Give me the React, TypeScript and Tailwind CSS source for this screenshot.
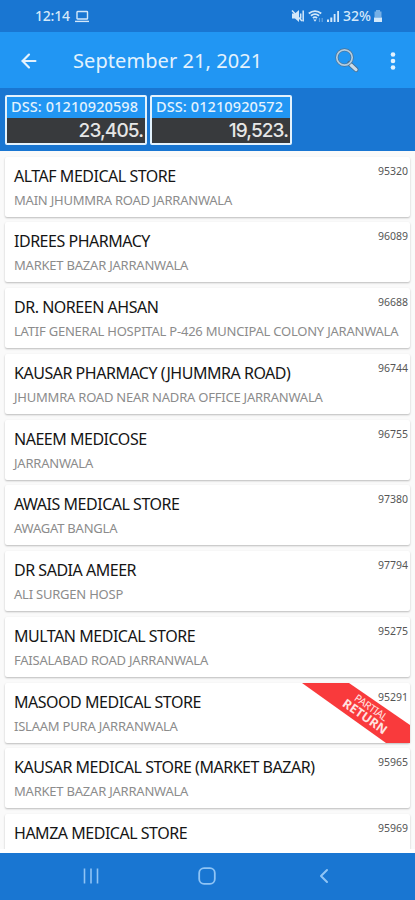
import { ArrowLeft, ChevronLeft } from 'lucide-react';

interface Store {
    name: string;
    address?: string;
    code: string;
    partialReturn?: boolean;
}

const stores: Store[] = [
    { name: 'ALTAF MEDICAL STORE', address: 'MAIN JHUMMRA ROAD JARRANWALA', code: '95320' },
    { name: 'IDREES PHARMACY', address: 'MARKET BAZAR JARRANWALA', code: '96089' },
    { name: 'DR. NOREEN AHSAN', address: 'LATIF GENERAL HOSPITAL P-426 MUNCIPAL COLONY JARANWALA', code: '96688' },
    { name: 'KAUSAR PHARMACY (JHUMMRA ROAD)', address: 'JHUMMRA ROAD NEAR NADRA OFFICE JARRANWALA', code: '96744' },
    { name: 'NAEEM MEDICOSE', address: 'JARRANWALA', code: '96755' },
    { name: 'AWAIS MEDICAL STORE', address: 'AWAGAT BANGLA', code: '97380' },
    { name: 'DR SADIA AMEER', address: 'ALI SURGEN HOSP', code: '97794' },
    { name: 'MULTAN MEDICAL STORE', address: 'FAISALABAD ROAD JARRANWALA', code: '95275' },
    { name: 'MASOOD MEDICAL STORE', address: 'ISLAAM PURA JARRANWALA', code: '95291', partialReturn: true },
    { name: 'KAUSAR MEDICAL STORE (MARKET BAZAR)', address: 'MARKET BAZAR JARRANWALA', code: '95965' },
    { name: 'HAMZA MEDICAL STORE', code: '95969' },
];

const StatusBar = () => (
    <div className="flex h-8 shrink-0 items-center justify-between bg-[#1976d2] pl-[35px] pr-8 text-sm font-medium text-[#d3e8fa]">
        <div className="flex items-center gap-1">
            <span className="tracking-[-0.2px]">12:14</span>
            <svg width="16" height="13" viewBox="0 0 16 13" fill="none" stroke="currentColor" strokeWidth="1.4">
                <rect x="3" y="1.5" width="10.5" height="7.5" rx="0.6" />
                <path d="M1 11.4h14" />
            </svg>
        </div>
        <div className="flex items-center">
            {/* Muted speaker */}
            <svg width="15" height="14" viewBox="0 0 15 14" fill="none" stroke="currentColor" strokeWidth="1.5">
                <path d="M1 4.500h3l4-3.500v12L4 9.500H1z" fill="currentColor" stroke="none" />
                <path d="M9.700 4.500v5M12.200 1.500v11M1 1.500l10 10.500" />
            </svg>
            {/* Wifi */}
            <svg className="ml-0.5" width="16" height="14" viewBox="0 0 16 14" fill="none" stroke="currentColor" strokeWidth="1.8">
                <path d="M.8 4.500C4.500 1.200 9.500 1.200 13.200 4.500M2.900 6.800c2.500-2.100 5.700-2.100 8.200 0M4.900 9c1.300-1 2.900-1 4.200 0" />
                <path d="M7 12.800L5.300 10.500h3.400z" fill="currentColor" stroke="none" />
                <path d="M11.500 9v4M14.200 9v4" strokeWidth="1.2" opacity=".4" />
            </svg>
            {/* Signal */}
            <svg className="ml-[3px]" width="13" height="14" viewBox="0 0 13 14" fill="currentColor">
                <path d="M0 10.500h2V13H0zM3.300 8.500h2V13h-2zM6.700 5h1.800v8H6.700zM10.200 2H12v11h-1.800z" />
            </svg>
            <span className="ml-[3px]">32%</span>
            <svg className="ml-0.5" width="10" height="14" viewBox="0 0 10 14" fill="currentColor">
                <path d="M3 1h4v1.500h1.500v6h-7v-6H3z" opacity=".5" />
                <path d="M1 8.500h8V13H1z" />
            </svg>
        </div>
    </div>
);

const Toolbar = () => (
    <div className="flex h-14 shrink-0 items-center bg-[#2196f3] pl-[18px] pr-[11px] pt-0.5 text-[#e3f2fd]">
        <ArrowLeft size={22} strokeWidth={2.4} />
        <h1 className="ml-[33px] flex-1 whitespace-nowrap text-xl tracking-[0.07px]">September 21, 2021</h1>
        <svg width="26" height="26" viewBox="0 0 26 26" fill="none">
            <path d="M15.500 15.500l6.500 6" stroke="#4c6f8e" strokeWidth="5" strokeLinecap="round" />
            <path d="M17 17l5 4.600" stroke="#c9dcea" strokeWidth="3.200" strokeLinecap="round" />
            <circle cx="10.500" cy="9.500" r="7.700" stroke="#4f7190" strokeWidth="3" />
            <circle cx="10.500" cy="9.500" r="7.700" stroke="#b0cce1" strokeWidth="1.700" />
        </svg>
        <svg className="ml-[22px]" width="22" height="22" viewBox="0 0 22 22" fill="currentColor">
            <circle cx="11" cy="4.500" r="2.300" />
            <circle cx="11" cy="11" r="2.300" />
            <circle cx="11" cy="17.500" r="2.300" />
        </svg>
    </div>
);

const TotalBox = ({ label, total }: { label: string; total: string }) => (
    <div className="flex h-[50px] w-[142px] flex-col rounded-[2px] border-2 border-[#e3f2fd] bg-[#383a3d]">
        <div className="flex h-[21px] items-center whitespace-nowrap bg-[#2196f3] pl-1 text-[14.5px] font-medium tracking-[0.1px] text-[#e3f2fd]">
            <span className="-mt-px">{label}</span>
        </div>
        <div className="flex flex-1 items-center justify-end pr-0.5 font-[Inter,sans-serif] text-[19px] font-medium leading-none tracking-[-0.9px] text-[#e6e6e6]">
            <span>{total}</span>
        </div>
    </div>
);

const ReturnRibbon = () => (
    <svg className="absolute right-0 top-0" width="108" height="60" viewBox="0 0 108 60">
        <path d="M0 0h47l61 42v18H84z" fill="#f93a3c" />
        <g transform="translate(66.500 28.500) rotate(35)" fill="#ffe3e1" textAnchor="middle">
            <text x="0" y="-1" fontSize="10.5" textLength="38">PARTIAL</text>
            <text x="0" y="10.5" fontSize="12.5" fontWeight="700" textLength="51">RETURN</text>
        </g>
    </svg>
);

const StoreCard = ({ store }: { store: Store }) => (
    <div className="relative h-[60px] shrink-0 rounded-[2px] bg-white pl-[9px] shadow-[0_1px_2px_rgba(0,0,0,0.25)]">
        {store.partialReturn && <ReturnRibbon />}
        <div className="flex justify-between">
            <h2 className="mt-2 whitespace-nowrap text-base leading-[22px] tracking-[-0.48px] text-[#151515]">{store.name}</h2>
            <span className="relative mr-0.5 mt-[7px] text-[10.5px] leading-[14px] text-[#555]">{store.code}</span>
        </div>
        {store.address && (
            <p className="mt-1 whitespace-nowrap text-[13px] leading-[18px] tracking-[-0.22px] text-[#8c8c8c]">{store.address}</p>
        )}
    </div>
);

const NavBar = () => (
    <div className="flex h-[47px] shrink-0 items-center justify-between bg-[#1976d2] pb-px pl-[83px] pr-[79px] text-[#8fc4f5]">
        <svg width="16" height="16" viewBox="0 0 16 16" fill="none" stroke="currentColor" strokeWidth="1.6">
            <path d="M1.500 .5v15M8 .5v15M14.500 .5v15" />
        </svg>
        <svg className="ml-[3px]" width="18" height="18" viewBox="0 0 18 18" fill="none" stroke="currentColor" strokeWidth="1.800">
            <rect x="1.200" y="1.200" width="15.600" height="15.600" rx="4.800" />
        </svg>
        <ChevronLeft size={24} strokeWidth={2} />
    </div>
);

const App = () => {
    return (
        <div className="flex h-[900px] w-[415px] flex-col overflow-hidden bg-[#fafafa] font-['Noto_Sans','Open_Sans',sans-serif]">
            <StatusBar />
            <Toolbar />
            <div className="flex h-[63px] shrink-0 gap-[3px] bg-[#1976d2] pl-[5px] pt-[7px]">
                <TotalBox label="DSS: 01210920598" total="23,405." />
                <TotalBox label="DSS: 01210920572" total="19,523." />
            </div>
            <div className="flex h-[698px] shrink-0 flex-col gap-[5.76px] overflow-hidden px-[5px] pt-[5.7px]">
                {stores.map((store) => (
                    <StoreCard key={store.code} store={store} />
                ))}
            </div>
            <div className="h-1 shrink-0 bg-white" />
            <NavBar />
        </div>
    );
};

export default App;
